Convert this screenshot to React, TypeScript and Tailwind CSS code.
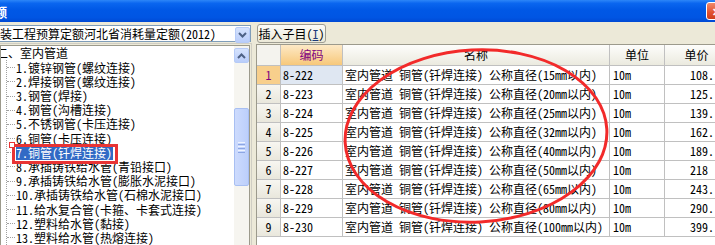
import React from "react";

const treeItems = [
  "1.镀锌钢管(螺纹连接)",
  "2.焊接钢管(螺纹连接)",
  "3.钢管(焊接)",
  "4.钢管(沟槽连接)",
  "5.不锈钢管(卡压连接)",
  "6.铜管(卡压连接)",
  "7.铜管(钎焊连接)",
  "8.承插铸铁给水管(青铅接口)",
  "9.承插铸铁给水管(膨胀水泥接口)",
  "10.承插铸铁给水管(石棉水泥接口)",
  "11.给水复合管(卡箍、卡套式连接)",
  "12.塑料给水管(黏接)",
  "13.塑料给水管(热熔连接)",
];

const rows = [
  { n: 1, code: "8-222", d: "15", price: "108." },
  { n: 2, code: "8-223", d: "20", price: "125." },
  { n: 3, code: "8-224", d: "25", price: "139." },
  { n: 4, code: "8-225", d: "32", price: "162." },
  { n: 5, code: "8-226", d: "40", price: "189." },
  { n: 6, code: "8-227", d: "50", price: "218" },
  { n: 7, code: "8-228", d: "65", price: "243." },
  { n: 8, code: "8-229", d: "80", price: "290." },
  { n: 9, code: "8-230", d: "100", price: "399." },
];

function Chevron({ up }: { up?: boolean }) {
  return (
    <svg width="9" height="6" viewBox="0 0 9 6">
      {up ? (
        <path d="M1 5 L4.5 1.5 L8 5" fill="none" stroke="#4d6185" strokeWidth="2" />
      ) : (
        <path d="M1 1 L4.5 4.5 L8 1" fill="none" stroke="#4d6185" strokeWidth="2" />
      )}
    </svg>
  );
}

export default function App() {
  return (
    <div className="relative w-[715px] h-[245px] overflow-hidden bg-[#ece9d8] text-[12px] text-black font-['Noto_Sans_CJK_SC','Noto_Sans',sans-serif] [font-feature-settings:'hwid']">
      {/* Title bar */}
      <div className="h-[22px] flex items-center bg-[linear-gradient(to_bottom,#2d86f8_0%,#0a66ef_15%,#0058e6_45%,#0055e3_80%,#0049d4_100%)] relative">
        <span className="ml-[-6px] text-white font-bold text-[13px] leading-none">额</span>
        <div className="absolute left-[706px] top-[2px] w-[21px] h-[18px] rounded-[3px] border border-white bg-[linear-gradient(to_bottom,#f08a6c,#e2512f_60%,#cf3d1d)] flex items-center justify-center">
          <span className="text-white text-[11px] font-bold leading-none">✕</span>
        </div>
      </div>

      <div className="flex h-[223px]">
        {/* Left panel */}
        <div className="w-[252px] shrink-0 flex flex-col">
          <div className="mt-[3px] ml-[-2px] w-[253px] h-[19px] bg-white border border-[#7f9db9] relative flex items-center">
            <span className="whitespace-nowrap leading-none ml-[1px]">装工程预算定额河北省消耗量定额(2012)</span>
            <div className="absolute right-0 top-[1px] w-[15px] h-[16px] rounded-[2px] border border-[#b6cbf7] bg-[linear-gradient(to_bottom,#d6e3fd,#b9cdfa)] flex items-center justify-center">
              <Chevron />
            </div>
          </div>
          <div className="mt-[1px] ml-[-2px] w-[254px] flex-1 border border-[#d0cec4] border-b-0 p-[1px] pb-0">
            <div className="h-full border border-[#9c9a8c] border-b-0 bg-white flex relative overflow-hidden">
              {/* Tree */}
              <div className="flex-1 relative pl-[2px]">
                <div className="absolute left-[5px] top-[14px] bottom-0 border-l border-dotted border-[#a0a0a0]" />
                <div className="h-[14.2px] flex items-center whitespace-nowrap ml-[-7px] leading-none">二、室内管道</div>
                {treeItems.map((t, i) => (
                  <div key={t} className="h-[14.2px] flex items-center whitespace-nowrap relative leading-none">
                    <div className="w-[8px] ml-[4px] border-t border-dotted border-[#a0a0a0]" />
                    {i === 6 ? (
                      <span className="ml-[1px] bg-[#316ac5] text-white h-[14px] flex items-center pr-[1px]">{t}</span>
                    ) : (
                      <span className="ml-[1px]">{t}</span>
                    )}
                  </div>
                ))}
              </div>
              {/* Scrollbar */}
              <div className="w-[15px] shrink-0 bg-[#f6f5f0] flex flex-col items-center pt-[2px]">
                <div className="w-[15px] h-[15px] rounded-[2px] border border-[#b6cbf7] bg-[linear-gradient(to_bottom,#d6e3fd,#b9cdfa)] flex items-center justify-center">
                  <Chevron up />
                </div>
                <div className="mt-[45px] w-[15px] h-[78px] rounded-[2px] border border-[#a8bff2] bg-[linear-gradient(to_right,#cddbfd,#bccffb)] flex flex-col items-center justify-center gap-[1px]">
                  <div className="w-[7px] h-px bg-[#eef3ff]" />
                  <div className="w-[7px] h-px bg-[#8ca6e4]" />
                  <div className="w-[7px] h-px bg-[#eef3ff]" />
                  <div className="w-[7px] h-px bg-[#8ca6e4]" />
                  <div className="w-[7px] h-px bg-[#eef3ff]" />
                  <div className="w-[7px] h-px bg-[#8ca6e4]" />
                </div>
              </div>
            </div>
          </div>
        </div>

        {/* Right panel */}
        <div className="flex-1 flex flex-col pl-[4px]">
          <div className="mt-[2px] ml-[1px] w-[69px] h-[19px] rounded-[3px] border border-[#9d9c92] bg-[linear-gradient(to_bottom,#fbfbf8,#ece9d8)] flex items-center justify-center whitespace-nowrap leading-none">
            插入子目(<span className="underline text-[#1c3a78]">I</span>)
          </div>
          <div className="mt-[1px] flex-1 border-l border-t border-[#9c9a8c] bg-white overflow-hidden">
            {/* Header */}
            <div className="flex h-[21px] border-b border-[#c0c0c0] whitespace-nowrap">
              <div className="w-[24px] shrink-0 border-r border-[#c0c0c0] bg-[#f4f3ee]" />
              <div className="w-[62px] shrink-0 border-r border-[#c0c0c0] bg-[linear-gradient(to_bottom,#fde9c6,#f7c87a)] text-[#800080] flex items-center justify-center">编码</div>
              <div className="w-[267px] shrink-0 border-r border-[#c0c0c0] bg-[linear-gradient(to_bottom,#fdfdfb,#ebeadf)] flex items-center justify-center">名称</div>
              <div className="w-[55px] shrink-0 border-r border-[#c0c0c0] bg-[linear-gradient(to_bottom,#fdfdfb,#ebeadf)] flex items-center justify-center">单位</div>
              <div className="w-[64px] shrink-0 border-r border-[#c0c0c0] bg-[linear-gradient(to_bottom,#fdfdfb,#ebeadf)] flex items-center justify-center">单价</div>
            </div>
            {rows.map((r) => (
              <div key={r.code} className="flex h-[19px] border-b border-[#c0c0c0] whitespace-nowrap leading-none">
                <div
                  className={
                    r.n === 1
                      ? "w-[24px] shrink-0 border-r border-[#c0c0c0] bg-[#f8cf8c] text-[#800080] flex items-center justify-center"
                      : "w-[24px] shrink-0 border-r border-[#c0c0c0] bg-[linear-gradient(to_bottom,#f7f6f1,#e9e7dc)] flex items-center justify-center"
                  }
                >
                  {r.n}
                </div>
                <div
                  className={
                    r.n === 1
                      ? "w-[62px] shrink-0 border-r border-[#c0c0c0] bg-[#dfe7f2] flex items-center pl-[2px]"
                      : "w-[62px] shrink-0 border-r border-[#c0c0c0] flex items-center pl-[2px]"
                  }
                >
                  {r.code}
                </div>
                <div className="w-[267px] shrink-0 border-r border-[#c0c0c0] flex items-center pl-[2px]">
                  室内管道 铜管(钎焊连接） 公称直径({r.d}mm以内）
                </div>
                <div className="w-[55px] shrink-0 border-r border-[#c0c0c0] flex items-center pl-[3px]">10m</div>
                <div
                  className={
                    r.price.endsWith(".")
                      ? "w-[64px] shrink-0 border-r border-[#c0c0c0] flex items-center justify-end pr-[14px]"
                      : "w-[64px] shrink-0 border-r border-[#c0c0c0] flex items-center justify-end pr-[20px]"
                  }
                >
                  {r.price}
                </div>
              </div>
            ))}
          </div>
        </div>
      </div>

      {/* Annotations */}
      <div className="absolute left-[12px] top-[144px] w-[106px] h-[20px] border-[3px] border-[#e83434]" />
      <div className="absolute left-[9px] top-[142px] w-[6px] h-[6px] border border-[#e83434] bg-white" />
      <svg className="absolute left-0 top-0 pointer-events-none" width="715" height="245">
        <ellipse cx="476" cy="136" rx="131" ry="86" fill="none" stroke="#f22a2a" strokeWidth="3" transform="rotate(-3 476 136)" />
      </svg>
    </div>
  );
}
